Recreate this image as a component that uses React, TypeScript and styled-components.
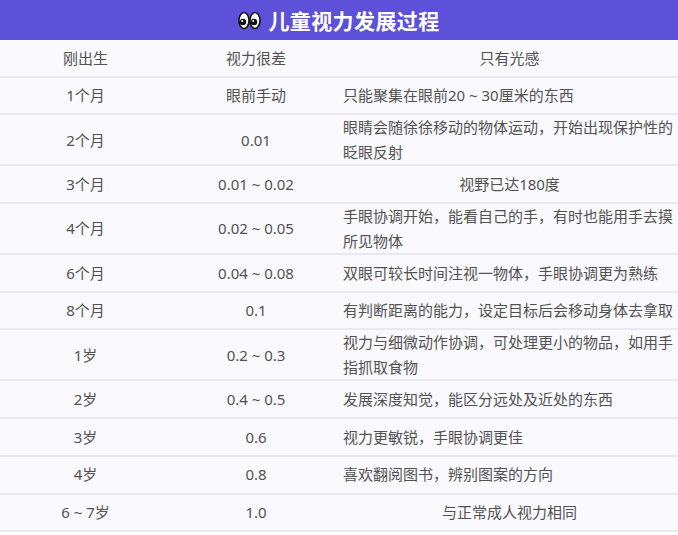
import React from "react";
import styled, { createGlobalStyle } from "styled-components";

const Global = createGlobalStyle`
  html, body { margin: 0; padding: 0; background: #ffffff; }
  body { font-family: "Noto Sans", "Noto Sans CJK SC", sans-serif; }
`;

const Page = styled.div`
  width: 678px;
`;

const TitleBar = styled.div`
  height: 40px;
  background: #5d50d9;
  display: flex;
  align-items: center;
  justify-content: center;
  gap: 7px;
  color: #ffffff;
`;

const TitleText = styled.span`
  font-family: "Noto Sans CJK SC", sans-serif;
  font-weight: 700;
  font-size: 21px;
  line-height: 40px;
  letter-spacing: 0.4px;
`;

const Table = styled.div`
  display: flex;
  flex-direction: column;
`;

const Row = styled.div`
  display: grid;
  grid-template-columns: 171px 170px 1fr;
  min-height: 35.7px;
  background: #faf9fd;
  border-bottom: 2px solid #ebe8f1;
`;

const Cell = styled.div<{ $align?: "left" | "center" }>`
  display: flex;
  align-items: center;
  justify-content: ${(p) => (p.$align === "left" ? "flex-start" : "center")};
  text-align: ${(p) => p.$align ?? "center"};
  padding: ${(p) => (p.$align === "left" ? "0 0 0 2px" : "0")};
  font-family: "Noto Sans", "Noto Sans CJK SC", sans-serif;
  font-size: 15px;
  line-height: 24.5px;
  color: #525252;
`;

const Eyes = () => (
  <svg width="23" height="19" viewBox="0 0 23 19">
    <ellipse cx="6" cy="9.5" rx="5" ry="8" fill="#fff" stroke="#111" strokeWidth="1.6" />
    <ellipse cx="17" cy="9.5" rx="5" ry="8" fill="#fff" stroke="#111" strokeWidth="1.6" />
    <circle cx="5" cy="11" r="3.2" fill="#111" />
    <circle cx="16" cy="11" r="3.2" fill="#111" />
    <circle cx="4.2" cy="10" r="1" fill="#fff" />
    <circle cx="15.2" cy="10" r="1" fill="#fff" />
  </svg>
);

type RowData = { age: string; vision: string; desc: string; center?: boolean };

const rows: RowData[] = [
  { age: "刚出生", vision: "视力很差", desc: "只有光感", center: true },
  { age: "1个月", vision: "眼前手动", desc: "只能聚集在眼前20 ~ 30厘米的东西" },
  { age: "2个月", vision: "0.01", desc: "眼睛会随徐徐移动的物体运动，开始出现保护性的眨眼反射" },
  { age: "3个月", vision: "0.01 ~ 0.02", desc: "视野已达180度", center: true },
  { age: "4个月", vision: "0.02 ~ 0.05", desc: "手眼协调开始，能看自己的手，有时也能用手去摸所见物体" },
  { age: "6个月", vision: "0.04 ~ 0.08", desc: "双眼可较长时间注视一物体，手眼协调更为熟练" },
  { age: "8个月", vision: "0.1", desc: "有判断距离的能力，设定目标后会移动身体去拿取" },
  { age: "1岁", vision: "0.2 ~ 0.3", desc: "视力与细微动作协调，可处理更小的物品，如用手指抓取食物" },
  { age: "2岁", vision: "0.4 ~ 0.5", desc: "发展深度知觉，能区分远处及近处的东西" },
  { age: "3岁", vision: "0.6", desc: "视力更敏锐，手眼协调更佳" },
  { age: "4岁", vision: "0.8", desc: "喜欢翻阅图书，辨别图案的方向" },
  { age: "6 ~ 7岁", vision: "1.0", desc: "与正常成人视力相同", center: true },
];

export default function App() {
  return (
    <Page>
      <Global />
      <TitleBar>
        <Eyes />
        <TitleText>儿童视力发展过程</TitleText>
      </TitleBar>
      <Table>
        {rows.map((r) => (
          <Row key={r.age}>
            <Cell>{r.age}</Cell>
            <Cell>{r.vision}</Cell>
            <Cell $align={r.center ? "center" : "left"}>{r.desc}</Cell>
          </Row>
        ))}
      </Table>
    </Page>
  );
}
